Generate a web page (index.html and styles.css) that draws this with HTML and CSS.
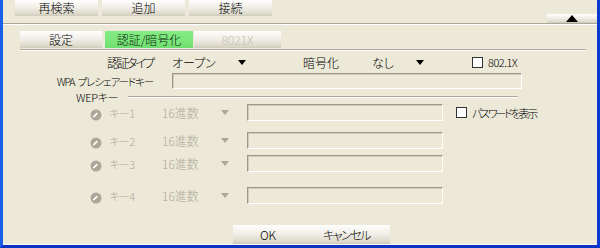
FILE: index.html
```html
<!DOCTYPE html>
<html lang="ja">
<head>
<meta charset="utf-8">
<link rel="stylesheet" href="styles.css">
</head>
<body>
<div class="win">
  <div class="topbar">
    <div class="actions">
      <button class="btn top">再検索</button>
      <button class="btn top">追加</button>
      <button class="btn top">接続</button>
    </div>
    <button class="btn collapse" aria-label="collapse">
      <svg width="12" height="7" viewBox="0 0 12 7"><polygon points="0,7 12,7 6,0" fill="#000"/></svg>
    </button>
  </div>

  <div class="tabs">
    <div class="tab">設定</div>
    <div class="tab active">認証/暗号化</div>
    <div class="tab disabled">8021X</div>
  </div>

  <div class="form">
    <div class="row r1">
      <span class="lbl">認証タイプ</span>
      <span class="sel sel1"><span>オープン</span><svg class="tri" width="8" height="5" viewBox="0 0 8 5"><polygon points="0,0 8,0 4,5" fill="#000"/></svg></span>
      <span class="lbl2">暗号化</span>
      <span class="sel sel2"><span>なし</span><svg class="tri" width="8" height="5" viewBox="0 0 8 5"><polygon points="0,0 8,0 4,5" fill="#000"/></svg></span>
      <span class="chk"></span><span class="chk-text">802.1X</span>
    </div>
    <div class="row r2">
      <span class="lbl">WPA プレシェアードキー</span>
      <span class="input wide"></span>
    </div>
    <div class="wep-head">
      <span>WEPキー</span><span class="rule"></span>
    </div>
    <div class="keys">
      <div class="krow k1">
        <svg class="radio" width="12" height="12" viewBox="0 0 12 12"><circle cx="6" cy="6" r="5.5" fill="#aca899"/><line x1="3.8" y1="7.6" x2="6.8" y2="4.6" stroke="#fff" stroke-width="1.6" stroke-linecap="round"/></svg>
        <span class="kname">キー1</span>
        <span class="ksel"><span>16進数</span><svg class="tri" width="8" height="5" viewBox="0 0 8 5"><polygon points="0,0 8,0 4,5" fill="#aca899"/></svg></span>
        <span class="input key"></span>
        <span class="chk show"></span><span class="chk-text pw">パスワードを表示</span>
      </div>
      <div class="krow k2">
        <svg class="radio" width="12" height="12" viewBox="0 0 12 12"><circle cx="6" cy="6" r="5.5" fill="#aca899"/><line x1="3.8" y1="7.6" x2="6.8" y2="4.6" stroke="#fff" stroke-width="1.6" stroke-linecap="round"/></svg>
        <span class="kname">キー2</span>
        <span class="ksel"><span>16進数</span><svg class="tri" width="8" height="5" viewBox="0 0 8 5"><polygon points="0,0 8,0 4,5" fill="#aca899"/></svg></span>
        <span class="input key"></span>
      </div>
      <div class="krow k3">
        <svg class="radio" width="12" height="12" viewBox="0 0 12 12"><circle cx="6" cy="6" r="5.5" fill="#aca899"/><line x1="3.8" y1="7.6" x2="6.8" y2="4.6" stroke="#fff" stroke-width="1.6" stroke-linecap="round"/></svg>
        <span class="kname">キー3</span>
        <span class="ksel"><span>16進数</span><svg class="tri" width="8" height="5" viewBox="0 0 8 5"><polygon points="0,0 8,0 4,5" fill="#aca899"/></svg></span>
        <span class="input key"></span>
      </div>
      <div class="krow k4">
        <svg class="radio" width="12" height="12" viewBox="0 0 12 12"><circle cx="6" cy="6" r="5.5" fill="#aca899"/><line x1="3.8" y1="7.6" x2="6.8" y2="4.6" stroke="#fff" stroke-width="1.6" stroke-linecap="round"/></svg>
        <span class="kname">キー4</span>
        <span class="ksel"><span>16進数</span><svg class="tri" width="8" height="5" viewBox="0 0 8 5"><polygon points="0,0 8,0 4,5" fill="#aca899"/></svg></span>
        <span class="input key"></span>
      </div>
    </div>
  </div>

  <div class="footer">
    <button class="btn foot ok">OK</button>
    <button class="btn foot cancel">キャンセル</button>
  </div>
</div>
</body>
</html>
```
FILE: styles.css
```css
* { box-sizing: border-box; }
html, body { margin: 0; padding: 0; }
body {
  width: 600px;
  height: 248px;
  overflow: hidden;
  font-family: "Noto Sans CJK JP", "Noto Sans", sans-serif;
  font-size: 12px;
  font-weight: 300;
  font-feature-settings: "palt";
  color: #000;
  background: #ece9d8;
}
.win {
  width: 600px;
  height: 248px;
  background: #ece9d8;
  border-left: 3px solid #1a5ee8;
  border-right: 3px solid #0a3ad0;
  border-bottom: 3px solid #0b33c4;
  box-shadow: inset 0 -1px 0 #f8f7f1;
  display: flex;
  flex-direction: column;
}
.btn {
  font: inherit;
  color: #000;
  border: 0;
  padding: 0;
  margin: 0;
  background: linear-gradient(#fefefd, #f1efe8 45%, #dedbcd 85%, #cfcbbb);
  display: flex;
  align-items: center;
  justify-content: center;
  line-height: 1;
}
.topbar {
  height: 25px;
  flex: none;
  display: flex;
  justify-content: space-between;
  align-items: flex-start;
  border-bottom: 1px solid #fff;
  box-shadow: inset 0 -1px 0 #aca899;
}
.actions {
  display: flex;
  gap: 4px;
  padding-left: 12px;
}
.btn.top {
  width: 83px;
  height: 16px;
  font-size: 12px;
}
.collapse {
  width: 50px;
  height: 9px;
  margin-top: 14px;
  align-items: flex-end;
  padding-bottom: 1px;
}
.collapse svg { display: block; width: 12px; height: 7px; }

.tabs {
  flex: none;
  display: flex;
  margin: 6px 0 0 17px;
  width: 566px;
  height: 20px;
  border-bottom: 1px solid #fff;
  box-shadow: inset 0 -1px 0 #aca899;
  padding-bottom: 2px;
}
.tab {
  height: 17px;
  width: 82px;
  display: flex;
  align-items: center;
  justify-content: center;
  background: linear-gradient(#fefefd, #f1efe8 45%, #dedbcd 85%, #cfcbbb);
}
.tab.active {
  width: 88px;
  margin-left: 3px;
  background: linear-gradient(#84ec84, #7ae67a 60%, #6fdc6f);
  color: #0b1f0b;
}
.tab.disabled {
  width: 87px;
  margin-left: 1px;
  color: #c4c1b2;
}

.form {
  flex: none;
  display: flex;
  flex-direction: column;
}
.row {
  display: flex;
  align-items: center;
  height: 16px;
}
.r1 { margin-top: 3px; }
.r2 { margin-top: 3px; }
.lbl {
  width: 150px;
  text-align: right;
  white-space: nowrap;
}
.r1 .lbl { letter-spacing: -2px; }
.r2 .lbl { font-size: 10.5px; letter-spacing: -1.1px; word-spacing: 2px; }
.sel {
  display: flex;
  align-items: center;
  justify-content: space-between;
}
.sel1 { width: 74px; margin-left: 19px; }
.sel2 { width: 52px; }
.lbl2 { width: 69px; margin-left: 57px; }
.tri { display: block; flex: none; }
.chk {
  width: 11px;
  height: 11px;
  border: 1px solid #333;
  background: #fff;
  flex: none;
}
.r1 .chk { margin-left: 48px; }
.chk-text {
  margin-left: 5px;
  font-size: 11px;
  letter-spacing: -0.5px;
  white-space: nowrap;
}
.chk-text.pw { letter-spacing: -2.2px; }
.input {
  height: 16px;
  border: 1px solid;
  border-color: #9c9888 #fff #fff #9c9888;
  box-shadow: inset 1px 1px 0 #cfcbbd;
  background: #ece9d8;
  flex: none;
}
.input.wide { width: 350px; margin-left: 19px; }

.wep-head {
  display: flex;
  align-items: center;
  height: 15px;
  padding-left: 73px;
  font-size: 11px;
  letter-spacing: -0.3px;
}
.rule {
  width: 390px;
  margin-left: 10px;
  height: 2px;
  border-top: 1px solid #aca899;
  border-bottom: 1px solid #fff;
}

.keys {
  display: flex;
  flex-direction: column;
}
.krow {
  display: flex;
  align-items: center;
  height: 17px;
  padding-left: 87px;
  color: #aca899;
}
.k2 { margin-top: 11px; }
.k3 { margin-top: 6px; }
.k4 { margin-top: 15px; }
.radio { display: block; flex: none; margin-top: 4px; }
.kname {
  width: 53px;
  margin-left: 7px;
  font-size: 11px;
  letter-spacing: -0.5px;
}
.ksel {
  width: 85px;
  display: flex;
  align-items: center;
  font-size: 12px;
}
.ksel .tri { margin-left: 22px; }
.input.key { width: 196px; height: 17px; }
.chk.show { margin-left: 13px; }
.krow .chk-text { color: #000; }

.footer {
  flex: none;
  display: flex;
  margin-top: 21px;
  padding-left: 230px;
}
.btn.foot { height: 19px; }
.ok { width: 70px; }
.cancel { width: 87px; letter-spacing: -1.5px; }
```
